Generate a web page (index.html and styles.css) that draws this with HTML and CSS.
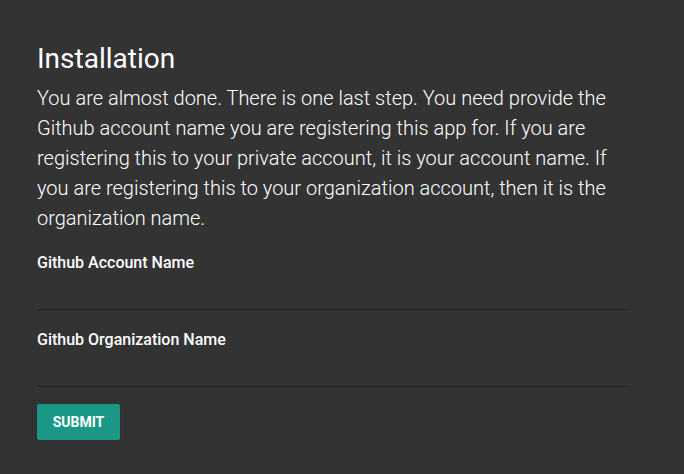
FILE: index.html
```html
<!DOCTYPE html>
<html lang="en">
<head>
<meta charset="utf-8">
<title>Installation</title>
<link rel="stylesheet" href="styles.css">
</head>
<body>
<main class="page">
  <h1 class="title">Installation</h1>
  <p class="intro">You are almost done. There is one last step. You need provide the Github account name you are registering this app for. If you are registering this to your private account, it is your account name. If you are registering this to your organization account, then it is the organization name.</p>
  <form class="form">
    <label class="field">
      <span class="field-label">Github Account Name</span>
      <input class="field-input" type="text">
    </label>
    <label class="field">
      <span class="field-label">Github Organization Name</span>
      <input class="field-input" type="text">
    </label>
    <div class="actions">
      <button class="submit" type="button">Submit</button>
    </div>
  </form>
</main>
</body>
</html>
```
FILE: styles.css
```css
html, body {
  margin: 0;
  padding: 0;
  background: #333333;
}
body {
  font-family: Roboto, "Noto Sans", sans-serif;
  color: #ffffff;
}
.page {
  padding: 41px 56px 0 37px;
}
.title {
  margin: 0;
  font-size: 28px;
  line-height: 36px;
  font-weight: 400;
}
.intro {
  margin: 6px 0 0;
  font-size: 20px;
  line-height: 30px;
  font-weight: 300;
}
.form {
  margin-top: 20px;
  display: flex;
  flex-direction: column;
  gap: 20px;
}
.field {
  display: flex;
  flex-direction: column;
}
.field-label {
  font-size: 16px;
  line-height: 20px;
  font-weight: 500;
}
.field-input {
  height: 37px;
  box-sizing: border-box;
  border: 0;
  border-bottom: 1px solid #232323;
  background: transparent;
  color: #fff;
  font: inherit;
  outline: none;
  padding: 0;
}
.actions {
  margin-top: -3px;
}
.submit {
  width: 83px;
  height: 36px;
  border: 0;
  border-radius: 2px;
  background: #1a9885;
  color: #fff;
  font-family: Roboto, sans-serif;
  font-weight: 700;
  font-size: 14px;
  text-transform: uppercase;
  box-shadow: 0 2px 2px rgba(0,0,0,0.3);
  padding: 0;
}
```
